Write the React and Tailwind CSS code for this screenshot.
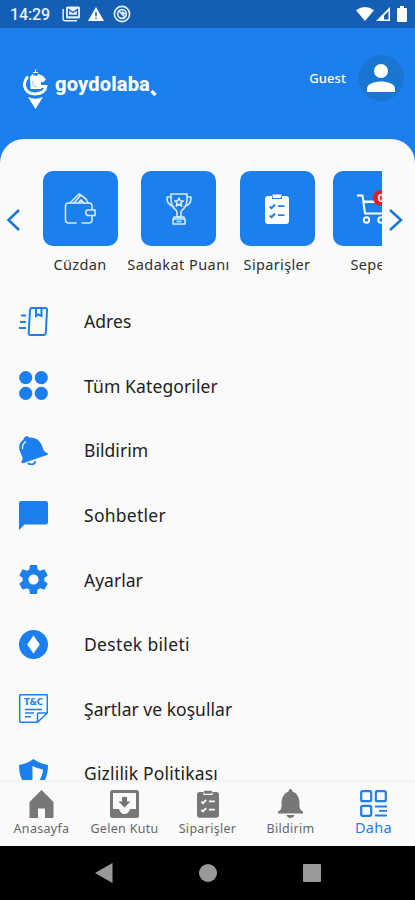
import React from "react";

const StatusBar = () => (
  <div className="h-7 shrink-0 bg-[#145fb5] flex items-center justify-between pl-[10px] pr-[8px] text-white">
    <div className="flex items-center">
      <span className="font-['Roboto',sans-serif] font-medium text-[16px] leading-none w-[52px] pt-[2px] tracking-[-0.1px] text-[#eaf3ff]">
        14:29
      </span>
      <svg width="18" height="16" viewBox="0 0 18 16" className="block">
        <path d="M1.2 3v9.8a2 2 0 0 0 2 2H15" fill="none" stroke="#e6f0fc" strokeWidth="1.5" />
        <rect x="4" y="0.5" width="14" height="12" rx="1.5" fill="#e6f0fc" />
        <path d="M6.5 9.5V3.5L11 6.5l4.500-3v6z" fill="none" stroke="#145fb5" strokeWidth="1.3" />
      </svg>
      <svg width="16" height="14" viewBox="0 0 16 14" className="block ml-[8px]">
        <path d="M8 0l8 14H0z" fill="#fff" />
        <path d="M8 5v4.500M8 10.700v1.600" stroke="#145fb5" strokeWidth="1.4" />
      </svg>
      <svg width="18" height="18" viewBox="0 0 18 18" className="block ml-[9px]">
        <circle cx="9" cy="9" r="7.600" fill="none" stroke="#e6f0fc" strokeWidth="1.6" />
        <circle cx="9" cy="9" r="4.300" fill="none" stroke="#e6f0fc" strokeWidth="1.7" />
        <path d="M5.500 5.500l7 7M9 7l3 2" stroke="#e6f0fc" strokeWidth="1.7" />
      </svg>
    </div>
    <div className="flex items-center">
      <svg width="18" height="14" viewBox="0 0 18 14" className="block">
        <path d="M0 3.200Q9-3.200 18 3.200L9 14z" fill="#fff" />
      </svg>
      <svg width="14" height="14" viewBox="0 0 14 14" className="block ml-[2px]">
        <path d="M14 0v14H0z" fill="#fff" />
        <path d="M12.500 4v8.500H8V8.500z" fill="#145fb5" />
      </svg>
      <svg width="10" height="16" viewBox="0 0 10 16" className="block ml-[7px]">
        <path d="M3 0h4v2h2q1 0 1 1v12q0 1-1 1H1q-1 0-1-1V3q0-1 1-1h2z" fill="#fff" />
      </svg>
    </div>
  </div>
);

const Logo = () => (
  <div className="flex items-start h-[40px]">
    <svg width="25" height="40" viewBox="0 0 25 40" className="block">
      <path d="M12.500 0.500v3M10 3.500h5" stroke="#fff" strokeWidth="1.200" />
      <path d="M7 8L9.500 5Q12.500 9 15.500 5L20 7 23 10.500 20 13.500 18 12.500V20H7.500z" fill="#fff" />
      <path d="M5 7.500Q1 11.500 1.500 17 3 24.500 12 25 22 24.500 22.800 17.500H16" fill="none" stroke="#fff" strokeWidth="3" />
      <path d="M6.500 9.500Q3 15.500 6.500 20 11 24 18 20.500" fill="none" stroke="#1c7fee" strokeWidth="1.300" />
      <path d="M10 12v3.500q.5 2.500 4 2.500" fill="none" stroke="#8fc0f8" strokeWidth="1" />
      <path d="M5 28Q12.500 31.500 20 28L12.500 40z" fill="#fff" />
    </svg>
    <span className="ml-[7px] mt-[4px] font-['Roboto',sans-serif] font-extrabold text-[20px] leading-[23px] tracking-[0.2px] text-white">
      goydolaba
    </span>
    <svg width="7" height="7" viewBox="0 0 7 7" className="block mt-[21px]">
      <path d="M1.500 1l4 4" stroke="#fff" strokeWidth="3.200" />
    </svg>
  </div>
);

const Header = () => (
  <header className="h-[111px] shrink-0 flex items-start justify-between pl-[23px] pr-[11px]">
    <div className="pt-[41px]">
      <Logo />
    </div>
    <div className="flex items-center pt-[27px]">
      <span className="mr-[12px] text-[13px] leading-none font-medium text-white tracking-[0.1px]">Guest</span>
      <div className="w-[46px] h-[46px] rounded-full bg-[#1976d2] flex items-center justify-center">
        <svg width="28" height="28" viewBox="0 0 28 28" className="block">
          <circle cx="14" cy="7" r="7" fill="#fff" />
          <path d="M0 28v-3.500C0 20 8 17.500 14 17.500S28 20 28 24.500V28z" fill="#fff" />
        </svg>
      </div>
    </div>
  </header>
);

const WalletIcon = () => (
  <svg width="32" height="32" viewBox="0 0 32 32" fill="none" stroke="#d9eaff" strokeWidth="1.600" strokeLinecap="round">
    <path d="M12 30H4.500q-3 0-3-3V13q0-3 3-3H25q3 0 3 3v3M18 30h7q3 0 3-3v-4" />
    <path d="M31 17h-7.500a3 3 0 0 0 0 5.500H31z" />
    <path d="M6 10L15 1l3 2 4 3 2 4M10 10l6-7M14 10l3-3 3 3" />
  </svg>
);

const TrophyIcon = () => (
  <svg width="26" height="32" viewBox="0 0 26 32" fill="none" stroke="#d9eaff" strokeWidth="1.600" strokeLinejoin="round">
    <path d="M5 1h16v5q0 8-5 11l-1 2v5h-4v-5l-1-2Q5 14 5 6z" />
    <path d="M5 4H1q-.5 8 7.500 10M21 4h4q.5 8-7.500 10" />
    <path d="M13 5l1.200 2.700 3 .3-2.300 2 .7 3-2.600-1.600L10.400 13l.7-3-2.300-2 3-.3z" />
    <path d="M8 24h10v2H8zM7 26h12v5H7zM10.500 28.500h5" />
  </svg>
);

const OrdersIcon = ({ width, height, paper, mark }) => (
  <svg width={width} height={height} viewBox="0 0 24 30" className="block">
    <path d="M3 2h4.500V0.500h9V2H21q3 0 3 3v22q0 3-3 3H3q-3 0-3-3V5q0-3 3-3z" fill={paper} />
    <path d="M7.500 2.500v2h9v-2" fill="none" stroke={mark} strokeWidth="1.100" />
    <path d="M4.800 12.500l1.700 1.700 3.500-3.700M4.800 21.500l1.700 1.700 3.500-3.700" fill="none" stroke={mark} strokeWidth="2" />
    <path d="M13 12.200h6.500M13 21.200h6.500" stroke={mark} strokeWidth="1.800" />
  </svg>
);

const CartIcon = () => (
  <svg width="32" height="30" viewBox="0 0 32 30" fill="none" stroke="#fff" strokeWidth="2" className="ml-[5px]">
    <path d="M0 1.500h5.500L8 19.500h19l4-12H6.500M7 8h22" />
    <circle cx="9.500" cy="26" r="2.700" />
    <circle cx="24" cy="26" r="2.700" />
  </svg>
);

const shortcuts = [
  { label: "Cüzdan", icon: <WalletIcon />, style: "w-[98px] tracking-[0.35px]" },
  { label: "Sadakat Puanı", icon: <TrophyIcon />, style: "w-[99px] tracking-[0.45px]" },
  {
    label: "Siparişler",
    icon: <OrdersIcon width="24" height="30" paper="#fff" mark="#1c7fee" />,
    style: "w-[98px] tracking-[0.35px]",
  },
  { label: "Sepet", icon: <CartIcon />, style: "w-[89px] tracking-[0.35px]", badge: "0" },
];

const Shortcuts = () => (
  <div className="h-[118px] mt-[32px] shrink-0 flex items-start">
    <svg width="31" height="24" viewBox="0 0 31 24" className="block mt-[37px] shrink-0">
      <path d="M19 2L8.500 12 19 22" fill="none" stroke="#1976d2" strokeWidth="2.500" />
    </svg>
    <div className="w-[351px] h-full overflow-hidden flex">
      {shortcuts.map((item) => (
        <div key={item.label} className={`shrink-0 flex flex-col items-center ${item.style}`}>
          <div className="relative w-[75px] h-[75px] rounded-[10px] bg-[#1c7fee] flex items-center justify-center">
            {item.icon}
            {item.badge && (
              <span className="absolute left-[40px] top-[19px] w-[16px] h-[16px] rounded-full bg-[#e02020] text-white text-[11px] leading-[16px] font-bold text-center">
                {item.badge}
              </span>
            )}
          </div>
          <span className="mt-[8px] text-[14.5px] leading-[20px] whitespace-nowrap text-[#303030]">{item.label}</span>
        </div>
      ))}
    </div>
    <svg width="33" height="24" viewBox="0 0 33 24" className="block mt-[37px] shrink-0">
      <path d="M8 2l11 10L8 22" fill="none" stroke="#1976d2" strokeWidth="2.500" />
    </svg>
  </div>
);

const AddressIcon = () => (
  <svg width="29" height="29" viewBox="0 0 29 29" fill="none" stroke="#1c7fee" strokeWidth="2">
    <path d="M13 1H26q2.200 0 2 2l-1.200 23q-.2 2-2.200 2H11.500q-2 0-1.800-2L11 3q.2-2 2-2z" />
    <path d="M17 1v8l2.500-1.500L22.500 9V1" />
    <path d="M2 8.500h5M1 15h6M0 21h7" />
  </svg>
);

const CategoriesIcon = () => (
  <svg width="29" height="29" viewBox="0 0 29 29" fill="#1c7fee">
    <circle cx="6.700" cy="6.700" r="6.600" />
    <circle cx="22.300" cy="6.700" r="6.600" />
    <circle cx="6.700" cy="22.300" r="6.600" />
    <circle cx="22.300" cy="22.300" r="6.600" />
  </svg>
);

const TiltedBellIcon = () => (
  <svg width="29" height="29" viewBox="0 0 29 29">
    <path d="M4.500 3.500Q5 .5 7.500 .3q2-.3 2.500 1.200Q19 1 22.500 8.500L24.500 14q1 2.500 4 3 1 1.300-.5 2L4 27.300q-2 .2-1.500-1.500 2-3 .5-5.500L.8 15Q-1.500 8 4.500 3.500z" fill="#1c7fee" />
    <path d="M9 27q3 2.800 6.500 .3l1-2" fill="none" stroke="#1c7fee" strokeWidth="2" />
    <path d="M3.500 13Q3 8 7 5.500" fill="none" stroke="#fff" strokeWidth="1.200" />
  </svg>
);

const ChatIcon = () => (
  <svg width="29" height="29" viewBox="0 0 29 29">
    <path d="M2.500 0H26.500Q29 0 29 2.500V21q0 2.500-2.500 2.500H5.500L0 29V2.500Q0 0 2.500 0z" fill="#1c7fee" />
  </svg>
);

const GearIcon = () => (
  <svg width="29" height="29" viewBox="2 2 20 20">
    <path
      d="M19.430 12.980c.040-.320.070-.640.070-.980s-.030-.660-.070-.980l2.110-1.650c.190-.150.240-.420.120-.640l-2-3.460c-.120-.220-.390-.300-.610-.220l-2.490 1c-.520-.400-1.080-.730-1.690-.980l-.380-2.650C14.460 2.180 14.250 2 14 2h-4c-.250 0-.460.180-.490.420l-.380 2.650c-.610.250-1.170.590-1.690.980l-2.490-1c-.230-.090-.490 0-.610.220l-2 3.460c-.130.220-.070.490.120.640l2.110 1.650c-.040.320-.070.650-.070.980s.030.660.070.980l-2.110 1.650c-.190.150-.240.420-.120.640l2 3.460c.120.220.390.300.610.220l2.490-1c.520.400 1.080.730 1.690.980l.380 2.650c.030.240.240.420.490.420h4c.250 0 .460-.180.490-.420l.380-2.650c.610-.250 1.170-.590 1.690-.980l2.490 1c.230.090.490 0 .610-.220l2-3.460c.120-.220.070-.490-.120-.640l-2.110-1.650zM12 15.500c-1.930 0-3.500-1.570-3.500-3.500s1.570-3.500 3.500-3.500 3.500 1.570 3.500 3.500-1.570 3.500-3.500 3.500z"
      fill="#1c7fee"
    />
  </svg>
);

const TicketIcon = () => (
  <svg width="29" height="29" viewBox="0 0 29 29">
    <circle cx="14.500" cy="14.500" r="14.500" fill="#1c7fee" />
    <path d="M14.500 5.500l6.300 9-6.300 9-6.300-9z" fill="#fff" />
  </svg>
);

const TermsIcon = () => (
  <svg width="29" height="29" viewBox="0 0 29 29" fill="none" stroke="#1c7fee" strokeWidth="1.500">
    <path d="M1.500 .8h26q.8 0 .8 .8V19L18.500 28.200h-17q-.8 0-.8-.8V1.600q0-.8 .8-.8zM18.500 28V20q0-1 1-1h8.500" />
    <path d="M6 15.500h17M6 19h9M6 22.700h6" />
    <text x="14.500" y="11" fontSize="8.500" fontWeight="700" textAnchor="middle" fill="#1c7fee" stroke="none" textLength="19" fontFamily="DejaVu Sans, sans-serif">
      T&amp;C
    </text>
  </svg>
);

const ShieldIcon = () => (
  <svg width="29" height="32" viewBox="0 0 29 32" className="mt-[4px]">
    <path d="M14.500 0Q20 4.500 29 6q0 19-14.500 26Q0 25 0 6 9 4.500 14.500 0z" fill="#1c7fee" />
    <path d="M13.500 7q4.500 2.500 10.500 3.500-.5 11-10.500 16z" fill="#fff" />
  </svg>
);

const menuItems = [
  { label: "Adres", icon: <AddressIcon />, spacing: "tracking-[0.05px]" },
  { label: "Tüm Kategoriler", icon: <CategoriesIcon />, spacing: "tracking-[0.12px]" },
  { label: "Bildirim", icon: <TiltedBellIcon />, spacing: "tracking-[0.05px]" },
  { label: "Sohbetler", icon: <ChatIcon />, spacing: "tracking-[0.27px]" },
  { label: "Ayarlar", icon: <GearIcon />, spacing: "tracking-[0px]" },
  { label: "Destek bileti", icon: <TicketIcon />, spacing: "tracking-[0.33px]" },
  { label: "Şartlar ve koşullar", icon: <TermsIcon />, spacing: "tracking-[0.03px]" },
  { label: "Gizlilik Politikası", icon: <ShieldIcon />, spacing: "tracking-[0.18px]" },
];

const MenuList = () => (
  <ul className="flex-1 min-h-0 overflow-hidden">
    {menuItems.map((item) => (
      <li key={item.label} className="h-[64.6px] pl-[19px] flex items-center">
        <span className="w-[65px] shrink-0">{item.icon}</span>
        <span className={`text-[17.5px] leading-[24px] whitespace-nowrap text-[#222] ${item.spacing}`}>
          {item.label}
        </span>
      </li>
    ))}
  </ul>
);

const HomeIcon = () => (
  <svg width="25" height="28" viewBox="0 0 25 28">
    <path d="M12.500 0L24.500 12v16H16V18.500H9V28H.5V12z" fill="#777" />
  </svg>
);

const InboxIcon = () => (
  <svg width="29" height="28" viewBox="0 0 29 28">
    <path d="M2.500 0h24Q29 0 29 2.500v23q0 2.500-2.500 2.500h-24Q0 28 0 25.500v-23Q0 0 2.500 0z" fill="#777" />
    <path d="M3 3h23v16h-6q-1.500 5-5.500 5T9 19H3z" fill="#fafafa" />
    <path d="M12 7h5v4.500h3.500l-6 6-6-6H12z" fill="#777" />
  </svg>
);

const BellIcon = () => (
  <svg width="25" height="29" viewBox="0 0 25 29">
    <path d="M10.500 2.500q0-2.500 2-2.500t2 2.500Q21 5 21.500 13v5q.5 3.500 3.500 4.500v2H0v-2q3-1 3.500-4.500v-5Q4 5 10.500 2.500z" fill="#777" />
    <path d="M8.500 26h8q-1 3-4 3t-4-3z" fill="#777" />
  </svg>
);

const MoreIcon = () => (
  <svg width="27" height="27" viewBox="0 0 27 27" fill="none" stroke="#1c7fee" strokeWidth="2.200">
    <rect x="1.200" y="1.200" width="10" height="10" rx="1.500" />
    <rect x="15.800" y="1.200" width="10" height="10" rx="1.500" />
    <rect x="1.200" y="15.800" width="10" height="10" rx="1.500" />
    <path d="M15 16.500h12M19 20.800h8M15 25.500h12" strokeWidth="1.800" />
  </svg>
);

const tabs = [
  { label: "Anasayfa", icon: <HomeIcon /> },
  { label: "Gelen Kutu", icon: <InboxIcon /> },
  { label: "Siparişler", icon: <OrdersIcon width="22" height="28" paper="#777" mark="#fafafa" /> },
  { label: "Bildirim", icon: <BellIcon /> },
  { label: "Daha", icon: <MoreIcon />, active: true },
];

const BottomNav = () => (
  <nav className="h-[66px] shrink-0 bg-[#fafafa] border-t-2 border-[#f2f2f2] grid grid-cols-5">
    {tabs.map((tab) => (
      <div key={tab.label} className="flex flex-col items-center pt-[7px]">
        <div className="h-[29px] flex items-center">{tab.icon}</div>
        <span
          className={
            tab.active
              ? "mt-px text-[14.5px] leading-[17px] tracking-[0.3px] text-[#1c7fee] whitespace-nowrap"
              : "mt-[2px] text-[12.5px] leading-[17px] tracking-[0.3px] text-[#666] whitespace-nowrap"
          }
        >
          {tab.label}
        </span>
      </div>
    ))}
  </nav>
);

const SystemNav = () => (
  <div className="h-[54px] shrink-0 bg-black flex items-center justify-center gap-[86px]">
    <svg width="18" height="20" viewBox="0 0 18 20">
      <path d="M17.500 0v20L0 10z" fill="#999" />
    </svg>
    <div className="w-[18px] h-[18px] rounded-full bg-[#999]" />
    <div className="w-[18px] h-[18px] rounded-[1px] bg-[#999]" />
  </div>
);

const App = () => {
  return (
    <div className="w-[415px] h-[900px] overflow-hidden flex flex-col bg-[#1c7fee] font-['Noto_Sans',sans-serif]">
      <StatusBar />
      <Header />
      <main className="flex-1 min-h-0 flex flex-col bg-[#fafafa] rounded-t-[24px] overflow-hidden">
        <Shortcuts />
        <MenuList />
      </main>
      <BottomNav />
      <SystemNav />
    </div>
  );
};

export default App;
